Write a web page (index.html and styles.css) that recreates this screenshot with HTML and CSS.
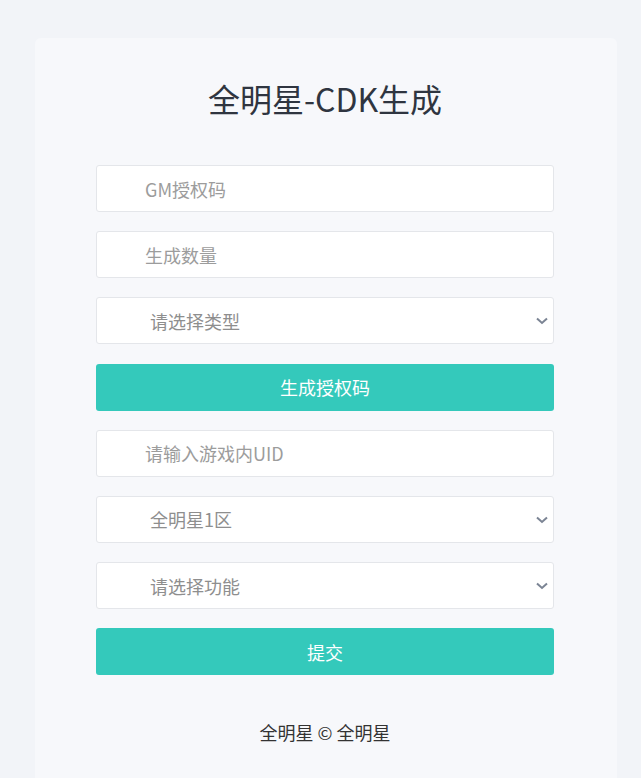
FILE: index.html
```html
<!DOCTYPE html>
<html lang="zh-CN">
<head>
<meta charset="utf-8">
<title>全明星-CDK生成</title>
<link rel="stylesheet" href="styles.css">
</head>
<body>
<div class="card">
  <h1 class="title">全明星-CDK生成</h1>
  <form class="form">
    <input class="field" type="text" placeholder="GM授权码">
    <input class="field" type="text" placeholder="生成数量">
    <div class="select-wrap">
      <select class="field select">
        <option>请选择类型</option>
      </select>
      <svg class="chev" width="12" height="8" viewBox="0 0 12 8"><path d="M1 1.5 L6 6 L11 1.5" fill="none" stroke="#7b8494" stroke-width="2"/></svg>
    </div>
    <button class="btn" type="button">生成授权码</button>
    <input class="field" type="text" placeholder="请输入游戏内UID">
    <div class="select-wrap">
      <select class="field select">
        <option>全明星1区</option>
      </select>
      <svg class="chev" width="12" height="8" viewBox="0 0 12 8"><path d="M1 1.5 L6 6 L11 1.5" fill="none" stroke="#7b8494" stroke-width="2"/></svg>
    </div>
    <div class="select-wrap">
      <select class="field select">
        <option>请选择功能</option>
      </select>
      <svg class="chev" width="12" height="8" viewBox="0 0 12 8"><path d="M1 1.5 L6 6 L11 1.5" fill="none" stroke="#7b8494" stroke-width="2"/></svg>
    </div>
    <button class="btn" type="button">提交</button>
  </form>
  <p class="footer">全明星 © 全明星</p>
</div>
</body>
</html>
```

FILE: styles.css
```css
html, body {
  margin: 0;
  padding: 0;
  background: #f2f4f8;
  font-family: "Noto Sans CJK SC", "Noto Sans", sans-serif;
  height: 100%;
  overflow: hidden;
}

.card {
  margin: 38px 0 0 35px;
  width: 582px;
  min-height: 760px;
  box-sizing: border-box;
  background: #f7f8fb;
  border-radius: 6px;
  padding: 41px 63px 0 61px;
}

.title {
  margin: 0 0 48px;
  text-align: center;
  font-size: 32px;
  font-weight: 400;
  line-height: 38px;
  color: #2f3540;
}

.form {
  display: flex;
  flex-direction: column;
  gap: 19.2px;
}

.field {
  display: block;
  width: 100%;
  height: 47px;
  box-sizing: border-box;
  border: 1px solid #e4e6ea;
  border-radius: 3px;
  background: #fff;
  padding: 0 0 0 48px;
  font-family: inherit;
  font-size: 18px;
  color: #999;
  outline: none;
}

.field::placeholder {
  color: #9c9c9c;
}

.select-wrap {
  position: relative;
}

.select {
  -webkit-appearance: none;
  appearance: none;
  padding-left: 53px;
  color: #8e8e8e;
}

.chev {
  position: absolute;
  right: 6px;
  top: 20px;
  pointer-events: none;
}

.btn {
  display: block;
  width: 100%;
  height: 47px;
  border: none;
  border-radius: 3px;
  background: #34c9bb;
  color: #fff;
  font-family: inherit;
  font-size: 18px;
  cursor: pointer;
}

.footer {
  margin: 45px 0 0;
  text-align: center;
  font-size: 18px;
  line-height: 24px;
  color: #333;
}
```
